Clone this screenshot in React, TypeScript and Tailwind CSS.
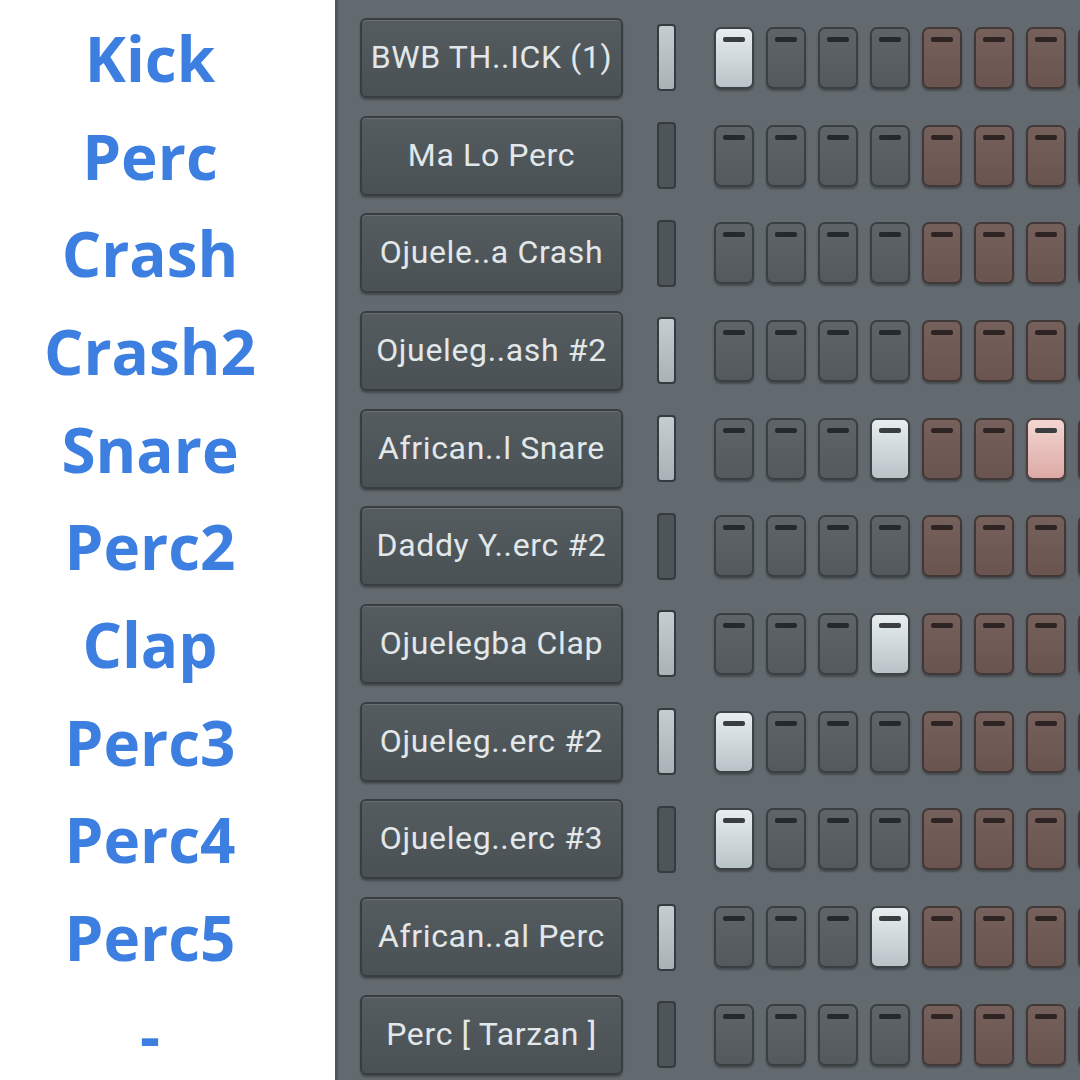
import React from 'react';

type Row = {
  label: string;
  channel: string;
  mixer: boolean;
  steps: number[];
};

const rows: Row[] = [
  { label: 'Kick', channel: 'BWB TH..ICK (1)', mixer: true, steps: [0] },
  { label: 'Perc', channel: 'Ma Lo Perc', mixer: false, steps: [] },
  { label: 'Crash', channel: 'Ojuele..a Crash', mixer: false, steps: [] },
  { label: 'Crash2', channel: 'Ojueleg..ash #2', mixer: true, steps: [] },
  { label: 'Snare', channel: 'African..l Snare', mixer: true, steps: [3, 6] },
  { label: 'Perc2', channel: 'Daddy Y..erc #2', mixer: false, steps: [] },
  { label: 'Clap', channel: 'Ojuelegba Clap', mixer: true, steps: [3] },
  { label: 'Perc3', channel: 'Ojueleg..erc #2', mixer: true, steps: [0] },
  { label: 'Perc4', channel: 'Ojueleg..erc #3', mixer: false, steps: [0] },
  { label: 'Perc5', channel: 'African..al Perc', mixer: true, steps: [3] },
  { label: '-', channel: 'Perc [ Tarzan ]', mixer: false, steps: [] },
];

function Step({ on, red }: { on: boolean; red: boolean }) {
  let body = 'bg-gradient-to-b from-[#5e6468] to-[#53595c] border-[#3a3f42]';
  if (red) body = 'bg-gradient-to-b from-[#76605c] to-[#6a5450] border-[#413837]';
  if (on && !red) body = 'bg-gradient-to-b from-[#e8eef0] to-[#b9c3c7] border-[#3c4245]';
  if (on && red) body = 'bg-gradient-to-b from-[#f3d6d2] to-[#dcaaa6] border-[#4c3f3e]';

  return (
    <div
      className={`relative w-[40px] h-[62px] flex-shrink-0 rounded-[7px] border-2 shadow-[0_2px_2px_rgba(0,0,0,0.3)] ${body}`}
    >
      {/* top dash */}
      <div
        className={`absolute left-1/2 top-[8px] -translate-x-1/2 w-[22px] h-[5px] rounded-[2px] ${
          on ? 'bg-[#3a3e41]' : red ? 'bg-[#2e2423]' : 'bg-[#26292b]'
        }`}
      />
    </div>
  );
}

export default function App() {
  return (
    <div className="w-[1080px] h-[1080px] overflow-hidden flex bg-[#626a6f]">
      {/* Labels */}
      <div className="w-[335px] flex-shrink-0 bg-white pt-[9px]">
        {rows.map((r) => (
          <div
            key={r.label}
            className="w-[300px] h-[97.7px] flex items-center justify-center text-[62px] font-bold leading-none text-[#3d7fe0]"
            style={{ fontFamily: '"Open Sans", "Noto Sans", sans-serif' }}
          >
            {r.label}
          </div>
        ))}
      </div>

      {/* Channel rack */}
      <div className="flex-1 border-l-[3px] border-[#50585c] pt-[9px] pl-[22px] overflow-hidden">
        {rows.map((r, i) => (
          <div key={i} className="h-[97.7px] flex items-center">
            <div
              className="w-[263px] h-[80px] flex-shrink-0 flex items-center justify-center pb-[2px] rounded-[6px] border-2 border-[#373d40] bg-gradient-to-b from-[#555c60] to-[#4a5155] shadow-[inset_0_1px_0_rgba(255,255,255,0.12),0_2px_2px_rgba(0,0,0,0.3)] text-[32px] tracking-[0.02em] text-[#e2e7e9] whitespace-nowrap"
              style={{ fontFamily: 'Roboto, sans-serif' }}
            >
              {r.channel}
            </div>
            <div
              className={`ml-[34px] w-[19px] h-[67px] flex-shrink-0 rounded-[4px] border-2 border-[#353b3e] ${
                r.mixer ? 'bg-gradient-to-b from-[#c5cdd0] to-[#a9b2b6]' : 'bg-[#4e5559]'
              }`}
            />
            <div className="ml-[38px] flex gap-[12px]">
              {Array.from({ length: 8 }, (_, s) => (
                <Step key={s} on={r.steps.includes(s)} red={s >= 4} />
              ))}
            </div>
          </div>
        ))}
      </div>
    </div>
  );
}
